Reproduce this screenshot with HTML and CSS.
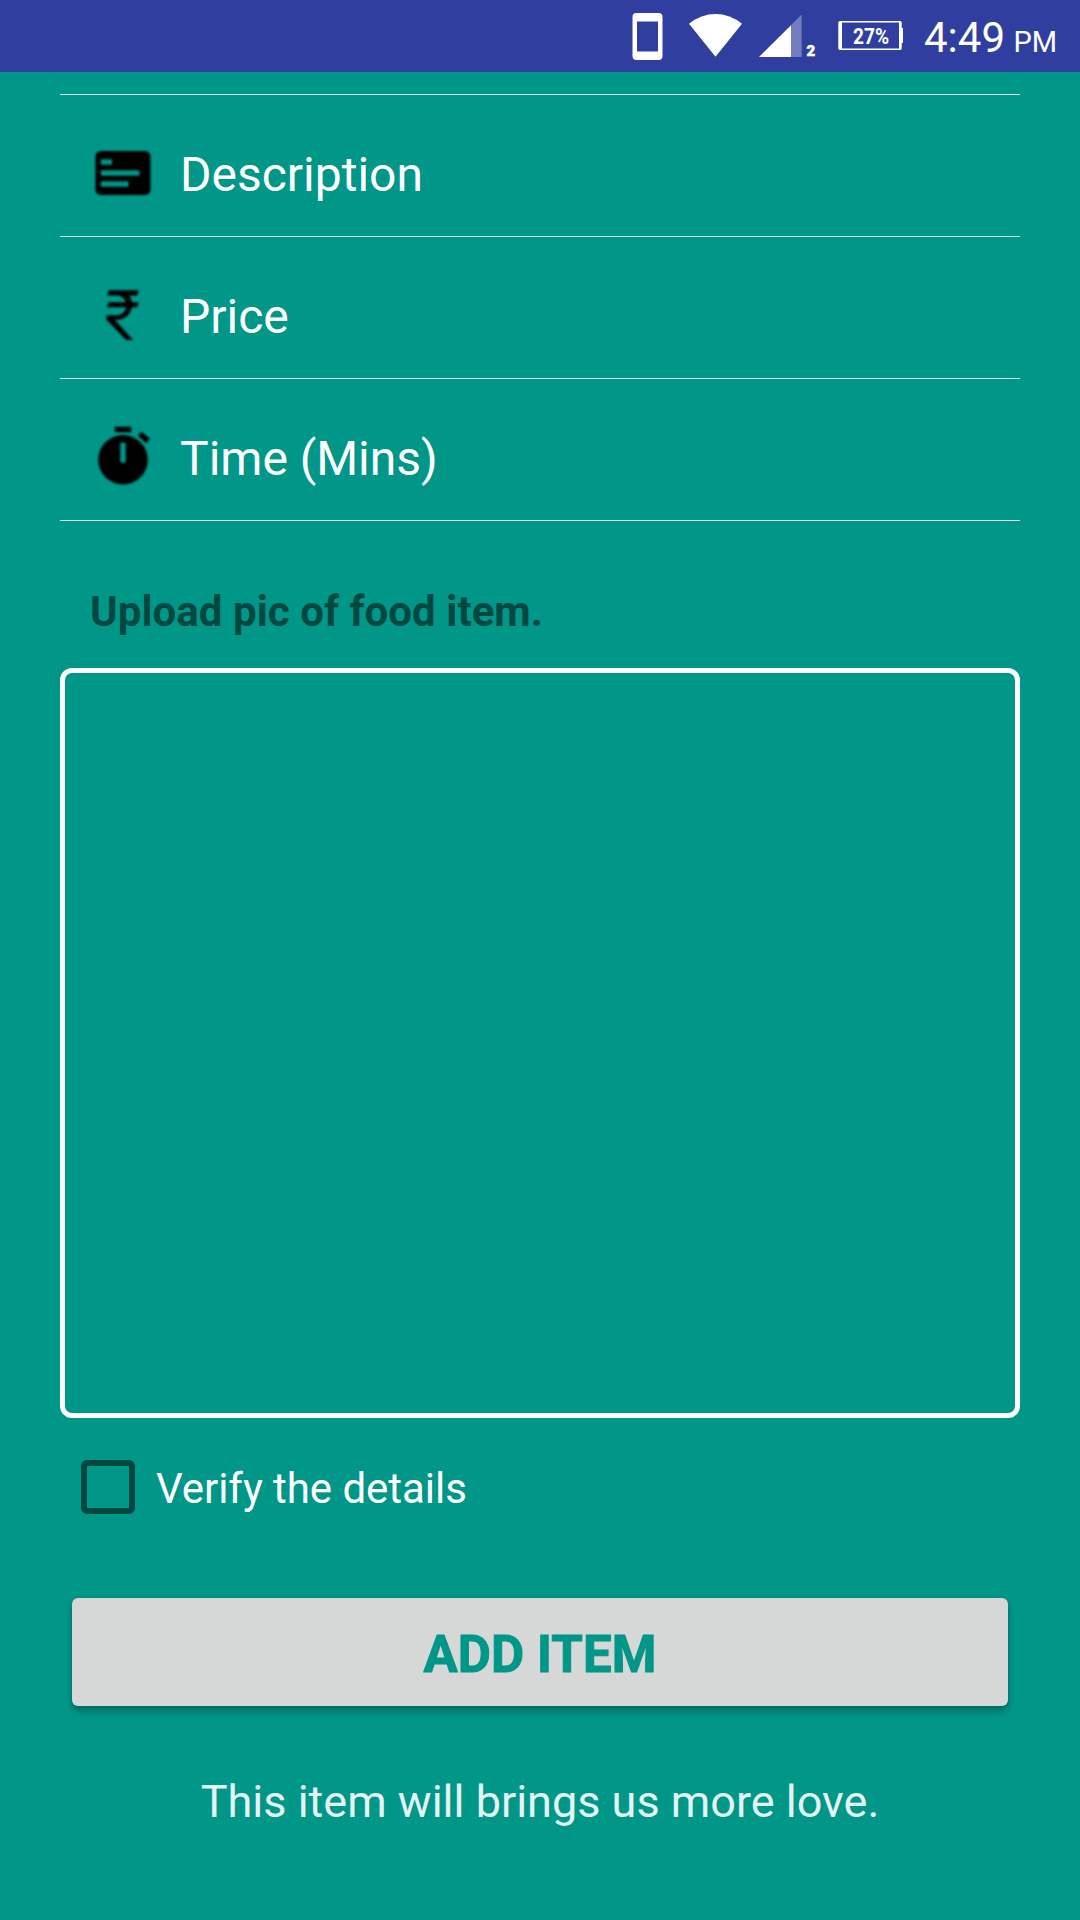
FILE: index.html
```html
<!DOCTYPE html>
<html lang="en">
<head>
<meta charset="utf-8">
<title>Add item</title>
<link rel="stylesheet" href="styles.css">
</head>
<body>
<header class="status">
  <svg class="status-icons" width="290" height="72" viewBox="620 0 290 72">
    <path fill="#fff" fill-rule="evenodd" d="M636.500 13h22a4 4 0 0 1 4 4v39a4 4 0 0 1-4 4h-22a4 4 0 0 1-4-4V17a4 4 0 0 1 4-4zM637 21.500v30h21v-30z"/>
    <path fill="#fff" d="M715.500 56.700L689 23.800Q701 14 715.500 14T742 23.800z"/>
    <path fill="#fff" fill-opacity=".32" d="M801.700 14.500V57H791V25.200z"/>
    <path fill="#fff" d="M791 25.200V57H759z"/>
    <text class="sim" x="806.500" y="56">2</text>
    <path fill="#fff" fill-rule="evenodd" d="M840 21h60a1.700 1.700 0 0 1 1.700 1.700V28H903v15h-1.300v5.300A1.700 1.700 0 0 1 900 50h-60a1.700 1.700 0 0 1-1.700-1.700V22.700A1.700 1.700 0 0 1 840 21zM842 22.500v26h57v-26z"/>
    <text class="charge" x="853" y="44" textLength="36" lengthAdjust="spacingAndGlyphs">27%</text>
  </svg>
  <div class="clock">4:49 <span class="meridiem">PM</span></div>
</header>
<main class="form">
  <div class="field">
    <svg class="icon" viewBox="0 0 24 24"><path fill-rule="evenodd" d="M4 4h16a2 2 0 0 1 2 2v12a2 2 0 0 1-2 2H4a2 2 0 0 1-2-2V6a2 2 0 0 1 2-2zM4 7v2h4V7zM4 11v2h14v-2zM4 15v2h10v-2z"/></svg>
    <span class="hint">Description</span>
  </div>
  <div class="field">
    <svg class="icon" viewBox="0 0 24 24"><path d="M6.800 3H17.700L17.100 4.900H14.300C14.800 5.600 15.100 6.500 15.200 7.400H17.700L17.100 9.200H15.200C14.800 11.600 12.900 13.500 10.300 13.700H9L15.700 21.100H13.200L6 13.700V12.100H9.700C11.500 12 12.800 10.900 13.100 9.200H6.200L6.800 7.400H13C12.500 5.800 11.300 4.900 9.700 4.900H6.200z"/></svg>
    <span class="hint">Price</span>
  </div>
  <div class="field">
    <svg class="icon" viewBox="0 0 24 24"><path fill-rule="evenodd" d="M9 1h6v2H9zM18.700 2.800L21.800 5.400 20.500 7 17.400 4.300zM12 4a9 9 0 1 1 0 18a9 9 0 1 1 0-18zM11 6.800v7.200h2V6.800z"/></svg>
    <span class="hint">Time (Mins)</span>
  </div>
  <h2 class="label">Upload pic of food item.</h2>
  <div class="picture"></div>
  <label class="verify"><span class="box"></span><span class="verify-text">Verify the details</span></label>
  <button class="add" type="button"><span class="add-text">ADD ITEM</span></button>
  <p class="note">This item will brings us more love.</p>
</main>
</body>
</html>
```
FILE: styles.css
```css
* { box-sizing: border-box; }
body {
  margin: 0;
  width: 1080px;
  height: 1920px;
  overflow: hidden;
  background: #009688;
  color: #fff;
  font-family: Roboto, sans-serif;
}
.status {
  display: flex;
  height: 72px;
  padding-left: 620px;
  background: #303f9f;
}
.status-icons { flex: none; }
.sim { font-size: 15px; font-weight: 900; fill: #fff; stroke: #fff; stroke-width: .5px; }
.charge { font-size: 22.500px; font-weight: 700; fill: #fff; }
.clock {
  padding: 13px 0 0 14px;
  font-size: 42px;
  line-height: 50px;
  white-space: nowrap;
}
.meridiem { font-size: 29px; margin-left: -2px; }
.form {
  display: flex;
  flex-direction: column;
  margin: 22px 60px 0;
  border-top: 1px solid #e0f3f1;
}
.field {
  display: flex;
  height: 142px;
  padding: 45px 0 0 30px;
  border-bottom: 1px solid #e0f3f1;
}
.icon { width: 66px; height: 66px; filter: blur(1px); }
.hint { margin-left: 24px; padding-top: 7px; font-size: 48px; line-height: 56px; }
.label {
  margin: 66px 0 0;
  padding-left: 30px;
  height: 81px;
  font-size: 42px;
  font-weight: 700;
  line-height: 50px;
  letter-spacing: .04px;
  color: #004840;
}
.picture { height: 750px; border: 5px solid #fff; border-radius: 12px; }
.verify { display: flex; margin-top: 42px; padding-left: 21px; height: 54px; }
.box { width: 54px; height: 54px; border: 6px solid #004840; border-radius: 6px; }
.verify-text { margin-left: 21px; padding-top: 4px; font-size: 42px; line-height: 50px; letter-spacing: -.05px; }
.add {
  margin: 84px 12px 0;
  height: 108px;
  padding: 5px 0 0;
  border: 0;
  border-radius: 6px;
  background: #d6d8d7;
  box-shadow: 0 6px 6px rgba(0, 0, 0, .22), 0 1px 5px rgba(0, 0, 0, .14);
  color: #009688;
  font: 700 51px/60px Roboto, sans-serif;
}
.add-text { letter-spacing: .1px; -webkit-text-stroke: 1px #009688; }
.note { margin: 69px 0 0; font-size: 45px; line-height: 54px; text-align: center; color: #e4f4f2; }
```
